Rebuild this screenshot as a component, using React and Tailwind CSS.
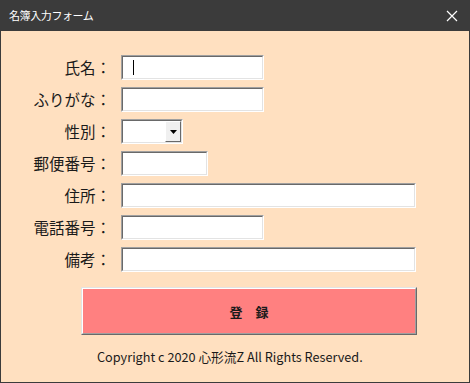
import React from "react";

const font = { fontFamily: '"Noto Sans CJK JP", "Noto Sans", sans-serif' };

function Sunken({ w, children }) {
  return (
    <div
      className={`h-[25px] border border-t-[#a0a0a0] border-l-[#a0a0a0] border-b-[#ffffff] border-r-[#ffffff] ${w}`}
    >
      <div className="h-full w-full border border-t-[#696969] border-l-[#696969] border-b-[#e3e3e3] border-r-[#e3e3e3] bg-white relative flex items-center">
        {children}
      </div>
    </div>
  );
}

function Row({ label, children }) {
  return (
    <div className="flex items-center h-[25px]">
      <div className="w-[112px] text-right text-[15.5px] leading-none text-[#1a1a1a] pr-[2px]">
        {label}
      </div>
      <div className="ml-[8px]">{children}</div>
    </div>
  );
}

export default function App() {
  return (
    <div
      className="w-[470px] h-[383px] flex flex-col bg-[#3b3b3b] overflow-hidden"
      style={font}
    >
      <div className="h-[31px] flex items-center justify-between pl-[9px] pr-[11px] text-white shrink-0">
        <span className="text-[11px] tracking-[-0.4px] leading-none">名簿入力フォーム</span>
        <svg width="12" height="12" viewBox="0 0 12 12" className="mr-[1px]">
          <path d="M1 1 L11 11 M11 1 L1 11" stroke="#ffffff" strokeWidth="1.2" />
        </svg>
      </div>
      <div className="flex-1 mx-[1px] mb-[1px] bg-[#ffe0c0] flex flex-col pt-[24px]">
        <div className="flex flex-col gap-[7px]">
          <Row label="氏名：">
            <Sunken w="w-[143px]">
              <div className="ml-[10px] w-[1px] h-[15px] bg-black" />
            </Sunken>
          </Row>
          <Row label="ふりがな：">
            <Sunken w="w-[143px]" />
          </Row>
          <Row label="性別：">
            <Sunken w="w-[62px]">
              <div className="absolute right-0 top-0 bottom-0 w-[16px] bg-[#f0f0f0] border border-t-[#ffffff] border-l-[#ffffff] border-b-[#696969] border-r-[#696969] flex items-center justify-center">
                <svg width="7" height="4" viewBox="0 0 7 4">
                  <path d="M0 0 H7 L3.5 4 Z" fill="#000" />
                </svg>
              </div>
            </Sunken>
          </Row>
          <Row label="郵便番号：">
            <Sunken w="w-[87px]" />
          </Row>
          <Row label="住所：">
            <Sunken w="w-[295px]" />
          </Row>
          <Row label="電話番号：">
            <Sunken w="w-[143px]" />
          </Row>
          <Row label="備考：">
            <Sunken w="w-[295px]" />
          </Row>
        </div>
        <div className="mt-[15px] ml-[80px] w-[336px] h-[48px] border border-t-[#e3e3e3] border-l-[#e3e3e3] border-b-[#696969] border-r-[#696969]">
          <div className="w-full h-full border border-t-[#ffffff] border-l-[#ffffff] border-b-[#a0a0a0] border-r-[#a0a0a0] bg-[#ff8080] flex items-center justify-center">
            <span className="text-[13px] font-bold text-[#1a1a1a] leading-none">登　録</span>
          </div>
        </div>
        <div className="mt-[16px] ml-[96px] text-[12.7px] leading-none text-[#1a1a1a]">
          Copyright c 2020 心形流Z All Rights Reserved.
        </div>
      </div>
    </div>
  );
}
